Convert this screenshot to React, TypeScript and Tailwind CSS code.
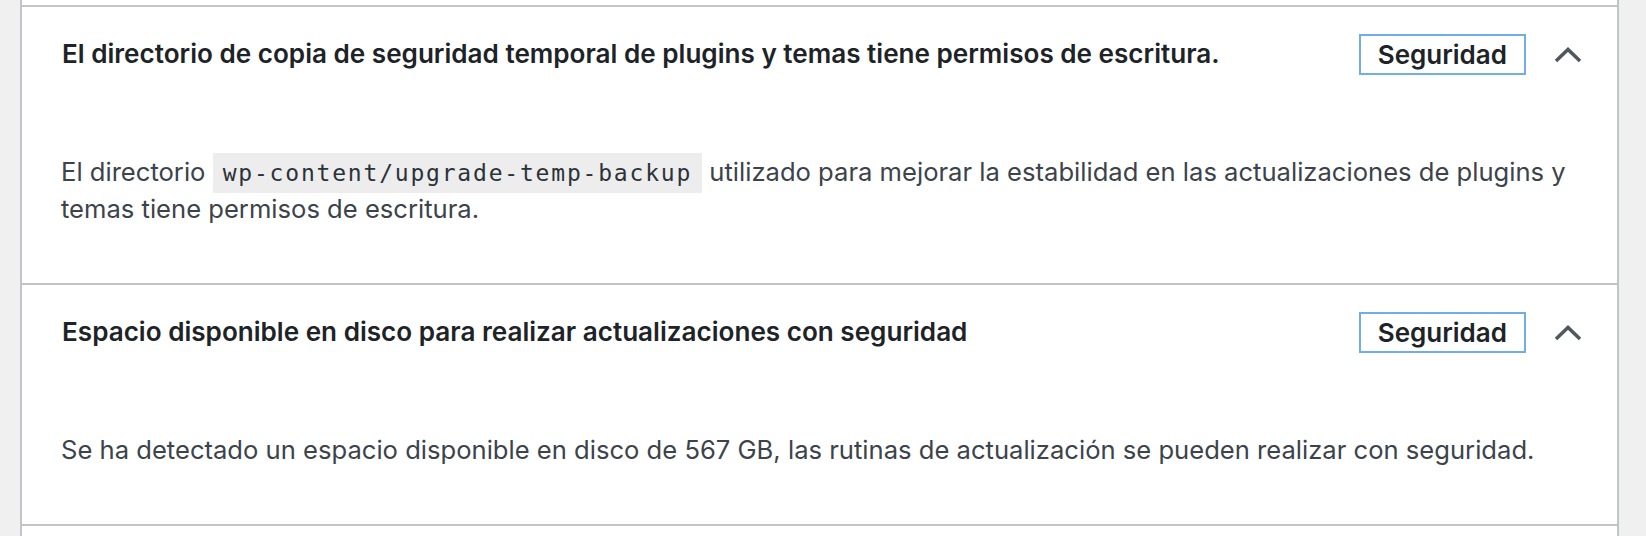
import { ReactNode } from "react";

interface CheckItem {
  title: string;
  badge: string;
  body: ReactNode;
}

const items: CheckItem[] = [
  {
    title:
      "El directorio de copia de seguridad temporal de plugins y temas tiene permisos de escritura.",
    badge: "Seguridad",
    body: (
      <>
        El directorio{" "}
        <code className="bg-black/[0.07] px-[10px] py-[7px] font-['DejaVu_Sans_Mono',monospace] text-[23px] tracking-[1.8px] text-[#2c3338]">
          wp-content/upgrade-temp-backup
        </code>{" "}
        utilizado para mejorar la estabilidad en las actualizaciones de plugins y temas tiene
        permisos de escritura.
      </>
    ),
  },
  {
    title: "Espacio disponible en disco para realizar actualizaciones con seguridad",
    badge: "Seguridad",
    body: "Se ha detectado un espacio disponible en disco de 567 GB, las rutinas de actualización se pueden realizar con seguridad.",
  },
];

function Chevron() {
  return (
    <svg width="28" height="17" viewBox="0 0 28 17" className="shrink-0">
      <polyline
        points="2,15 14,3.5 26,15"
        fill="none"
        stroke="#50575e"
        strokeWidth="3.5"
        strokeLinecap="butt"
        strokeLinejoin="miter"
      />
    </svg>
  );
}

function AccordionItem({ item }: { item: CheckItem }) {
  return (
    <div className="border-b-2 border-[#c3c4c7]">
      {/* Trigger row */}
      <div className="flex h-[94px] items-center justify-between pl-[40px] pr-[35px]">
        <h4 className="text-[26.1px] font-semibold text-[#1d2327]">{item.title}</h4>
        <div className="flex items-center gap-[28px]">
          <span className="flex h-[41px] items-center border-2 border-[#72aee6] px-[17px] text-[26px] font-semibold text-[#1d2327]">
            {item.badge}
          </span>
          <Chevron />
        </div>
      </div>

      {/* Panel */}
      <div className="pb-[56px] pl-[39px] pr-[40px] pt-[53px]">
        <p className="text-[25.6px] leading-[36px] text-[#3c434a]">{item.body}</p>
      </div>
    </div>
  );
}

export default function App() {
  return (
    <div className="flex h-[536px] w-[1646px] overflow-hidden bg-[#f0f0f1] pl-[20px] pr-[27px] font-['Inter',sans-serif]">
      <div className="flex-1 border-x-2 border-[#c3c4c7] bg-white pt-[5px]">
        <div className="border-t-2 border-[#c3c4c7]">
          {items.map((item, i) => (
            <AccordionItem key={i} item={item} />
          ))}
        </div>
      </div>
    </div>
  );
}
